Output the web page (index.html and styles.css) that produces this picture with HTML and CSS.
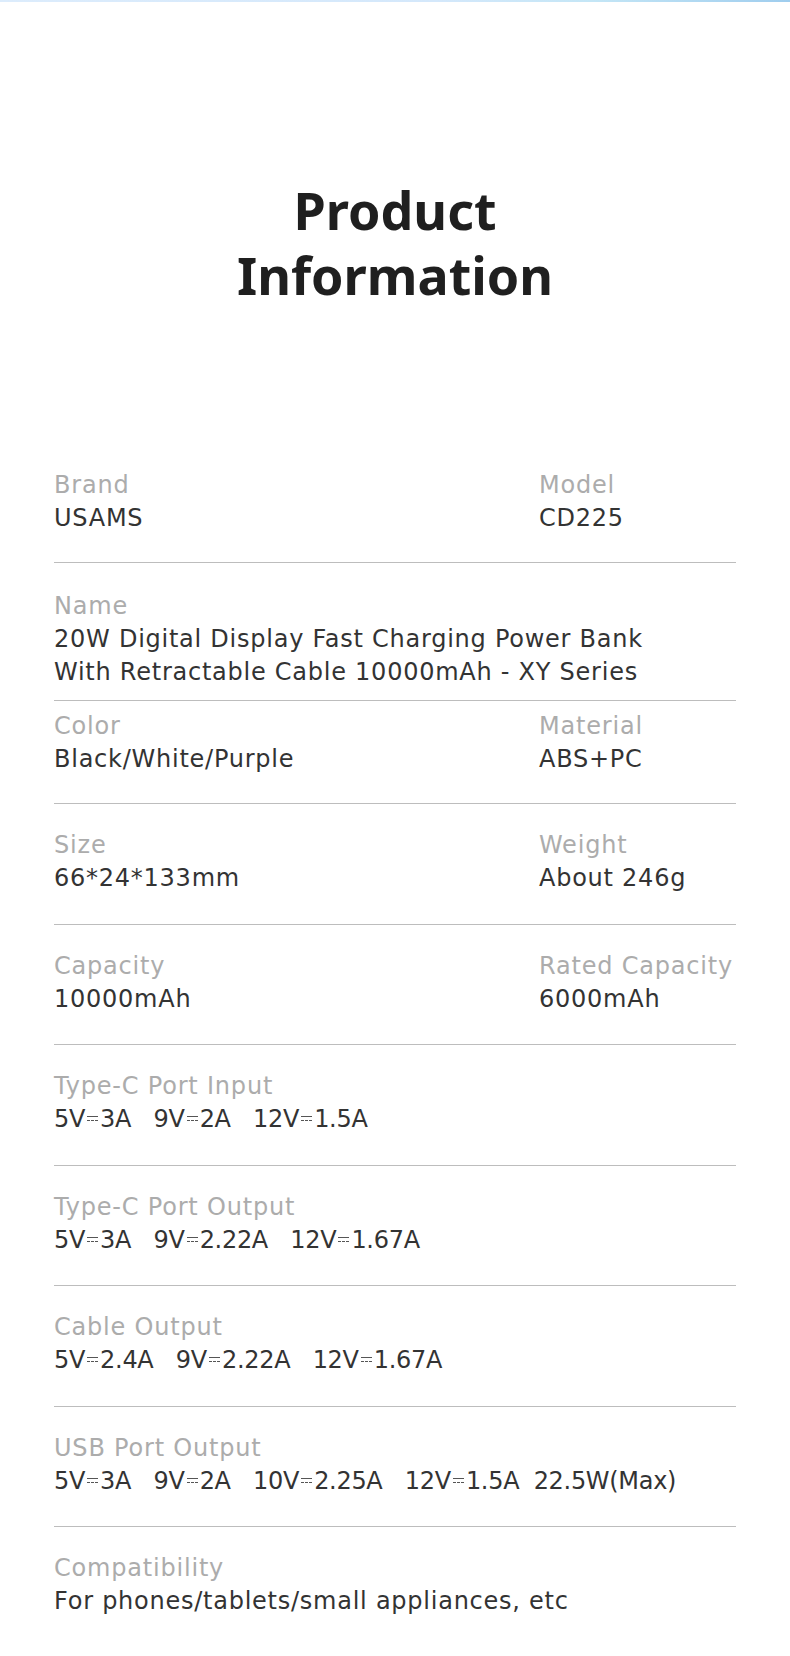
FILE: index.html
```html
<!DOCTYPE html>
<html lang="en">
<head>
    <meta charset="UTF-8">
    <meta name="viewport" content="width=device-width, initial-scale=1.0">
    <title>Product Information</title>
    <link rel="stylesheet" href="styles.css">
</head>
<body>
    <div class="top-bar"></div>
    <div class="container">
        <h1>Product<br>Information</h1>

        <div class="specs">
            <div class="row row-first">
                <div class="cell"><div class="label">Brand</div><div class="value">USAMS</div></div>
                <div class="cell"><div class="label">Model</div><div class="value">CD225</div></div>
            </div>
            <div class="row row-name">
                <div class="cell wide">
                    <div class="label">Name</div>
                    <div class="value">20W Digital Display Fast Charging Power Bank<br>With Retractable Cable 10000mAh - XY Series</div>
                </div>
            </div>
            <div class="row row-color">
                <div class="cell"><div class="label">Color</div><div class="value">Black/White/Purple</div></div>
                <div class="cell"><div class="label">Material</div><div class="value">ABS+PC</div></div>
            </div>
            <div class="row">
                <div class="cell"><div class="label">Size</div><div class="value">66*24*133mm</div></div>
                <div class="cell"><div class="label">Weight</div><div class="value">About 246g</div></div>
            </div>
            <div class="row">
                <div class="cell"><div class="label">Capacity</div><div class="value">10000mAh</div></div>
                <div class="cell"><div class="label">Rated Capacity</div><div class="value">6000mAh</div></div>
            </div>
            <div class="row">
                <div class="cell wide">
                    <div class="label">Type-C Port Input</div>
                    <div class="value power">
                        <span class="out">5V<i class="dc"></i>3A</span>
                        <span class="out">9V<i class="dc"></i>2A</span>
                        <span class="out">12V<i class="dc"></i>1.5A</span>
                    </div>
                </div>
            </div>
            <div class="row">
                <div class="cell wide">
                    <div class="label">Type-C Port Output</div>
                    <div class="value power">
                        <span class="out">5V<i class="dc"></i>3A</span>
                        <span class="out">9V<i class="dc"></i>2.22A</span>
                        <span class="out">12V<i class="dc"></i>1.67A</span>
                    </div>
                </div>
            </div>
            <div class="row">
                <div class="cell wide">
                    <div class="label">Cable Output</div>
                    <div class="value power">
                        <span class="out">5V<i class="dc"></i>2.4A</span>
                        <span class="out">9V<i class="dc"></i>2.22A</span>
                        <span class="out">12V<i class="dc"></i>1.67A</span>
                    </div>
                </div>
            </div>
            <div class="row">
                <div class="cell wide">
                    <div class="label">USB Port Output</div>
                    <div class="value power">
                        <span class="out">5V<i class="dc"></i>3A</span>
                        <span class="out">9V<i class="dc"></i>2A</span>
                        <span class="out">10V<i class="dc"></i>2.25A</span>
                        <span class="out">12V<i class="dc"></i>1.5A</span>
                        <span class="out max">22.5W(Max)</span>
                    </div>
                </div>
            </div>
            <div class="row row-last">
                <div class="cell wide">
                    <div class="label">Compatibility</div>
                    <div class="value">For phones/tablets/small appliances, etc</div>
                </div>
            </div>
        </div>
    </div>
</body>
</html>
```

FILE: styles.css
```css
body {
    margin: 0;
    padding: 0;
    background-color: #fff;
    font-family: "DejaVu Sans", "Open Sans", sans-serif;
}

.top-bar {
    height: 2px;
    background: linear-gradient(to right, #dcecfc 0%, #d4e8fb 55%, #c4e6f6 75%, #9fcdee 100%);
}

.container {
    padding: 0 54px;
}

h1 {
    margin: 175px 0 0;
    font-family: "Noto Sans", sans-serif;
    font-size: 52px;
    line-height: 65px;
    font-weight: 700;
    color: #1f1f1f;
    text-align: center;
}

.specs {
    margin-top: 162px;
}

.row {
    display: grid;
    grid-template-columns: 485px 1fr;
    padding: 25px 0 28.5px;
    border-bottom: 1px solid #bdbdbd;
}

.row-first {
    padding: 0 0 27px;
}

.row-name {
    padding: 27px 0 11px;
}

.row-color {
    padding: 9px 0 27px;
}

.row-last {
    border-bottom: none;
}

.wide {
    grid-column: 1 / 3;
}

.label {
    font-size: 24px;
    line-height: 33px;
    color: #acacac;
    letter-spacing: 0.8px;
}

.value {
    font-size: 24px;
    line-height: 33px;
    color: #333;
    letter-spacing: 0.75px;
}

.value.power {
    letter-spacing: -0.3px;
}

.out {
    margin-right: 15px;
}

.out.max {
    margin-left: -8px;
}

.dc {
    display: inline-block;
    width: 11px;
    height: 3px;
    margin: 0 2px;
    vertical-align: 6px;
    border-top: 1.5px solid #555;
    border-bottom: 1.5px dashed #555;
}
```
